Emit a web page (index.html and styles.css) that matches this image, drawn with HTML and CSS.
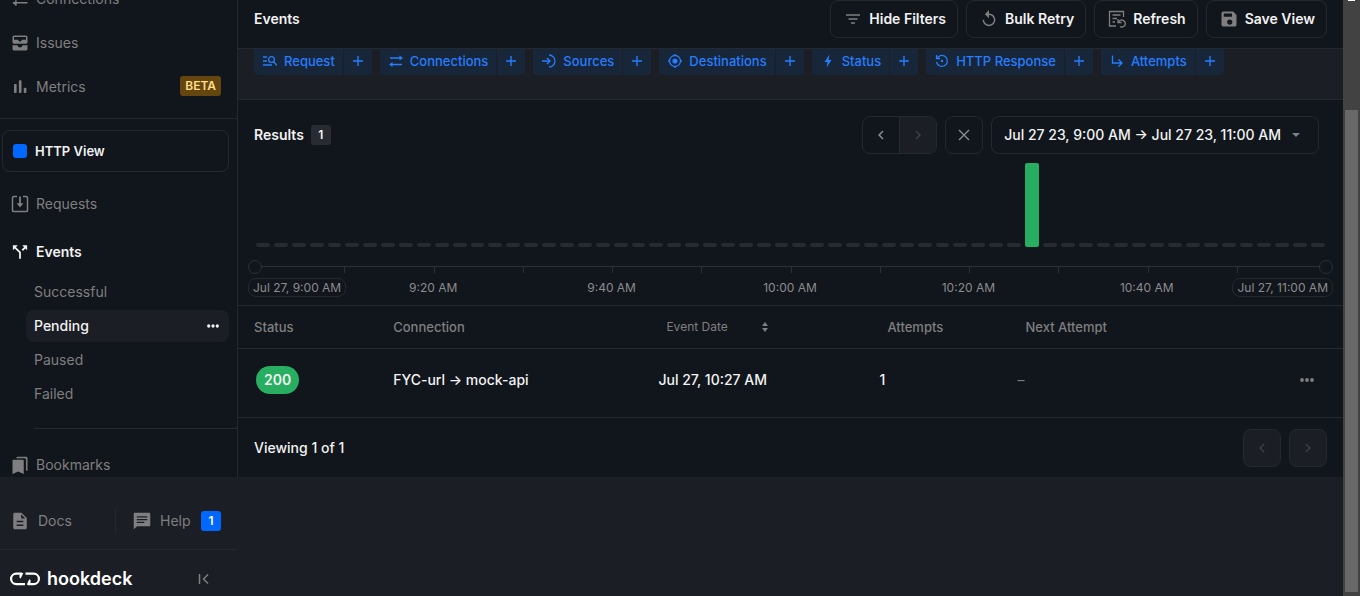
FILE: index.html
```html
<!DOCTYPE html>
<html lang="en">
<head>
<meta charset="utf-8">
<title>Events</title>
<link rel="stylesheet" href="styles.css">
</head>
<body>
<svg class="defs" aria-hidden="true">
  <symbol id="i-swap" viewBox="0 0 24 24"><path d="M2 7h19M17.500 3.500V10.500M22 17H3M6.500 13.500V20.500" fill="none" stroke="currentColor" stroke-width="2"/><path d="M17 3l5.500 4-5.500 1zM7 21l-5.500-4 5.500-1z" fill="currentColor"/></symbol>
  <symbol id="i-left" viewBox="0 0 24 24"><path fill="currentColor" d="M15.410 7.410L14 6l-6 6 6 6 1.410-1.410L10.830 12z"/></symbol>
  <symbol id="i-right" viewBox="0 0 24 24"><path fill="currentColor" d="M10 6L8.590 7.410 13.170 12l-4.580 4.590L10 18l6-6z"/></symbol>
  <symbol id="i-plus" viewBox="0 0 10 10"><path d="M5 0v10M0 5h10" stroke="currentColor" stroke-width="1.400"/></symbol>
  <symbol id="i-dots" viewBox="0 0 14 4"><g fill="currentColor"><circle cx="2" cy="2" r="1.900"/><circle cx="7" cy="2" r="1.900"/><circle cx="12" cy="2" r="1.900"/></g></symbol>
</svg>
<div class="app">
  <aside class="sidebar">
    <nav class="nav" aria-label="Main">
      <a class="nav-item" href="#"><svg class="icon"><use href="#i-swap"/></svg>Connections</a>
      <a class="nav-item" href="#"><svg class="icon" viewBox="0 0 24 24"><path fill="currentColor" fill-rule="evenodd" d="M19.500 2h-15C3 2 2 3 2 4.500v6C2 12 3 13 4.500 13h15c1.500 0 2.500-1 2.500-2.500v-6C22 3 21 2 19.500 2zM20 7.500h-5.500c-.500 1.500-1 2.500-2.500 2.500s-2-1-2.500-2.500H4V4h16zM2 15h6.500c.500 1.500 1.500 3 3.500 3s3-1.500 3.500-3H22v4.500c0 1.500-1 2.500-2.500 2.500h-15C3 22 2 21 2 19.500z"/></svg>Issues</a>
      <a class="nav-item" href="#"><svg class="icon" viewBox="0 0 24 24"><g fill="currentColor"><rect x="4" y="8" width="3.500" height="12" rx="1"/><rect x="10.500" y="3" width="3.500" height="17" rx="1"/><rect x="17" y="13" width="3.500" height="7" rx="1"/></g></svg>Metrics<span class="beta">BETA</span></a>
      <hr class="rule">
      <button class="source" type="button"><span class="swatch"></span>HTTP View</button>
      <a class="nav-item tall" href="#"><svg class="icon" viewBox="0 0 24 24"><path d="M8 2H3.500Q2 2 2 3.500v17Q2 22 3.500 22h17q1.500 0 1.500-1.500v-17Q22 2 20.500 2H16" fill="none" stroke="currentColor" stroke-width="2"/><path d="M12 2v10" stroke="currentColor" stroke-width="2.400"/><path d="M7.500 11h9L12 16.500z" fill="currentColor"/></svg>Requests</a>
      <a class="nav-item tall current" href="#"><svg class="icon" viewBox="0 0 24 24"><path fill="currentColor" d="M15 3l2.500 2.500-3.300 3.300 1.700 1.700 3.300-3.300L21.500 9.500V3zM9 3H2.500v6.500L4.900 7.200l5.900 5.900V21h2.400v-8.900L6.600 5.500z"/></svg>Events</a>
      <ul class="subnav">
        <li><a href="#">Successful</a></li>
        <li><a class="selected" href="#">Pending<svg class="more"><use href="#i-dots"/></svg></a></li>
        <li><a href="#">Paused</a></li>
        <li><a href="#">Failed</a></li>
      </ul>
      <hr class="rule inset">
      <a class="nav-item" href="#"><svg class="icon" viewBox="0 0 24 24"><path fill="currentColor" d="M20 19l2 1V3c0-1.100-.900-2-2-2H9C7.900 1 7 1.900 7 3h11c1.100 0 2 .900 2 2zM15.500 5h-12C2.700 5 2 5.700 2 6.500V24l7.500-3.200L17 24V6.500c0-.800-.700-1.500-1.500-1.500z"/></svg>Bookmarks</a>
    </nav>
    <footer class="side-foot">
      <div class="links">
        <a class="docs" href="#"><svg class="icon" viewBox="0 0 24 24"><path fill="currentColor" d="M14 1H5c-1.100 0-2 .900-2 2v18c0 1.100.900 2 2 2h14c1.100 0 2-.900 2-2V8zm2.500 17.500h-9v-2h9zm0-5h-9v-2h9zM13.500 8.500V3l5.500 5.500z"/></svg>Docs</a>
        <a class="help" href="#"><svg class="icon" viewBox="0 0 24 24"><path fill="currentColor" d="M21.500 1h-19C1.500 1 1 1.500 1 2.500V23l4.500-4h16c1 0 1.500-.500 1.500-1.500v-15C23 1.500 22.500 1 21.500 1zM5 5.500h14v1.800H5zm0 3.700h14V11H5zm10 5.500H5v-1.800h10z"/></svg>Help<span class="count">1</span></a>
      </div>
      <div class="brand">
        <a class="logo" href="#"><svg class="mark" viewBox="0 0 30 14" aria-hidden="true"><g fill="none" stroke="currentColor" stroke-width="2.200"><path d="M12 1.700H6.300a5.200 5.200 0 0 0 0 10.400H15"/><path d="M18 12.100h5.700a5.200 5.200 0 0 0 0-10.400H15.500"/></g><path fill="currentColor" d="M9.500 1H13.300l-2.600 5.500-1.200-.700zM20.500 12.800H16.700l2.600-5.500 1.200.700z"/></svg>hookdeck</a>
        <button class="collapse" type="button" aria-label="Collapse sidebar"><svg viewBox="0 0 12 12"><path d="M1.500 1v10M10 1.500L5.500 6l4.500 4.500" fill="none" stroke="currentColor" stroke-width="1.500"/></svg></button>
      </div>
    </footer>
  </aside>

  <main class="main">
    <header class="topbar">
      <h1>Events</h1>
      <div class="actions">
        <button class="btn" type="button"><svg class="icon" viewBox="0 0 18 18"><path d="M2 5h14M4.500 9h9M7 13h4" stroke="currentColor" stroke-width="1.500"/></svg>Hide Filters</button>
        <button class="btn" type="button"><svg class="icon" viewBox="0 0 24 24"><path fill="currentColor" d="M12 4.500V0L6.500 5.500 12 11V6.500c3.600 0 6.500 2.900 6.500 6.500s-2.900 6.500-6.500 6.500S5.500 16.600 5.500 13h-2c0 4.700 3.800 8.500 8.500 8.500s8.500-3.800 8.500-8.500-3.800-8.500-8.500-8.500z"/></svg>Bulk Retry</button>
        <button class="btn" type="button"><svg class="icon" viewBox="0 0 18 18"><g fill="none" stroke="currentColor" stroke-width="1.300"><path d="M8 16H1.500V1.500h14V7M4.500 5h8M4.500 8.500H9M4.500 12H7"/><path d="M10 9v3.500h3.500M10.500 12.300A3.500 3.500 0 1 1 12 16.500"/></g></svg>Refresh</button>
        <button class="btn" type="button"><svg class="icon" viewBox="0 0 24 24"><path fill="currentColor" d="M17.500 2H4.500C3 2 2 3 2 4.500v15C2 21 3 22 4.500 22h15c1.500 0 2.500-1 2.500-2.500v-13zM13 19.500c-2 0-3.500-1.500-3.500-3.500s1.500-3.500 3.500-3.500 3.500 1.500 3.500 3.500-1.500 3.500-3.500 3.500zM16 9H5V4.500h11z"/></svg>Save View</button>
      </div>
    </header>

    <div class="filters">
      <div class="chip"><button type="button"><svg class="ficon" viewBox="0 0 14 14"><g fill="none" stroke="currentColor" stroke-width="1.300"><path d="M0 3h4M0 7h4M0 11h9"/><circle cx="8.500" cy="5.500" r="2.900"/><path d="M10.500 7.500l3.500 4"/></g></svg>Request</button><button class="add" type="button" aria-label="Add Request filter"><svg><use href="#i-plus"/></svg></button></div>
      <div class="chip"><button type="button"><svg class="ficon" viewBox="0 0 14 14"><path d="M1 4h11M13 10.500H2" fill="none" stroke="currentColor" stroke-width="1.300"/><path d="M10.500 1.500L14 4l-3.500 2.500zM3.500 8L0 10.500 3.500 13z" fill="currentColor"/></svg>Connections</button><button class="add" type="button" aria-label="Add Connections filter"><svg><use href="#i-plus"/></svg></button></div>
      <div class="chip"><button type="button"><svg class="ficon" viewBox="0 0 14 14"><g fill="none" stroke="currentColor" stroke-width="1.300"><path d="M0 7h8M5 4l3 3-3 3M7 1a6 6 0 0 1 0 12"/></g></svg>Sources</button><button class="add" type="button" aria-label="Add Sources filter"><svg><use href="#i-plus"/></svg></button></div>
      <div class="chip"><button type="button"><svg class="ficon" viewBox="0 0 14 14"><g fill="none" stroke="currentColor" stroke-width="1.300"><circle cx="7" cy="7" r="5.500"/><path d="M7 0v2M7 12v2M0 7h2M12 7h2"/></g><circle cx="7" cy="7" r="2.600" fill="currentColor"/></svg>Destinations</button><button class="add" type="button" aria-label="Add Destinations filter"><svg><use href="#i-plus"/></svg></button></div>
      <div class="chip"><button type="button"><svg class="ficon" viewBox="0 0 14 14"><path fill="currentColor" d="M8.500 0.500L3.500 8H6.500L5.500 13.500 10.500 6H7.500z"/></svg>Status</button><button class="add" type="button" aria-label="Add Status filter"><svg><use href="#i-plus"/></svg></button></div>
      <div class="chip"><button type="button"><svg class="ficon" viewBox="0 0 14 14"><g fill="none" stroke="currentColor" stroke-width="1.300"><path d="M2.500 3.500A5.500 5.500 0 1 1 1.500 8M1.500 1v3.500H5"/></g><circle cx="7" cy="7" r="1.200" fill="currentColor"/></svg>HTTP Response</button><button class="add" type="button" aria-label="Add HTTP Response filter"><svg><use href="#i-plus"/></svg></button></div>
      <div class="chip"><button type="button"><svg class="ficon" viewBox="0 0 14 14"><path d="M2.500 1.500V9h9M8.500 5.500L12 9l-3.500 3.500" fill="none" stroke="currentColor" stroke-width="1.300"/></svg>Attempts</button><button class="add" type="button" aria-label="Add Attempts filter"><svg><use href="#i-plus"/></svg></button></div>
    </div>

    <section class="results">
      <div class="results-head">
        <h2>Results</h2><span class="total">1</span>
        <div class="range">
          <div class="pair">
            <button type="button" aria-label="Earlier"><svg><use href="#i-left"/></svg></button>
            <button type="button" aria-label="Later" disabled><svg><use href="#i-right"/></svg></button>
          </div>
          <button class="clear" type="button" aria-label="Clear range"><svg viewBox="0 0 12 12"><path d="M1 1l10 10M11 1L1 11" stroke="currentColor" stroke-width="1.400"/></svg></button>
          <button class="period" type="button">Jul 27 23, 9:00 AM → Jul 27 23, 11:00 AM<svg viewBox="0 0 8 4"><path d="M0 0h8L4 4z" fill="currentColor"/></svg></button>
        </div>
      </div>
      <div class="bars" id="bars"></div>
      <div class="axis">
        <div class="rail"><i></i><i></i><i></i><i></i><i></i><i></i><i></i><i></i><i></i><i></i><i></i><i></i></div>
        <input type="range" min="0" max="120" value="0" aria-label="Range start">
        <input type="range" min="0" max="120" value="120" aria-label="Range end">
      </div>
      <div class="times">
        <span class="end">Jul 27, 9:00 AM</span><span>9:20 AM</span><span>9:40 AM</span><span>10:00 AM</span><span>10:20 AM</span><span>10:40 AM</span><span class="end last">Jul 27, 11:00 AM</span>
      </div>
    </section>

    <table class="events">
      <colgroup><col class="c1"><col class="c2"><col class="c3"><col class="c4"><col class="c5"><col class="c6"></colgroup>
      <thead>
        <tr><th>Status</th><th>Connection</th><th class="in"><button class="sort" type="button">Event Date<svg viewBox="0 0 6 10"><path d="M0 4h6L3 0zM0 6h6L3 10z" fill="currentColor"/></svg></button></th><th class="in">Attempts</th><th class="in">Next Attempt</th><th></th></tr>
      </thead>
      <tbody>
        <tr><td><span class="pill">200</span></td><td>FYC-url → mock-api</td><td>Jul 27, 10:27 AM</td><td>1</td><td class="dim">–</td><td class="menu"><button type="button" aria-label="Event actions"><svg><use href="#i-dots"/></svg></button></td></tr>
      </tbody>
    </table>
    <div class="pager">
      <span>Viewing 1 of 1</span>
      <div class="pages">
        <button type="button" aria-label="Previous page" disabled><svg><use href="#i-left"/></svg></button>
        <button type="button" aria-label="Next page" disabled><svg><use href="#i-right"/></svg></button>
      </div>
    </div>
  </main>
  <div class="scrollbar" aria-hidden="true"><span class="up"></span><div class="thumb"></div></div>
</div>
<script src="chart.js"></script>
</body>
</html>
```
FILE: chart.js
```js
const bars = document.getElementById('bars');
for (let i = 0; i < 60; i++) {
  const bar = document.createElement('span');
  if (i === 43) bar.className = 'hit';
  bars.appendChild(bar);
}
```
FILE: styles.css
```css
:root {
  --bg: #11151c;
  --panel: #1b1e25;
  --line: #24282f;
  --grey: #7f7f7f;
  --text: #f2f2f2;
  --blue: #0068ff;
}
* { box-sizing: border-box; }
body {
  margin: 0;
  background: var(--panel);
  color: var(--text);
  font: 500 14px/20px Inter, "Liberation Sans", sans-serif;
}
button { font: inherit; color: inherit; background: none; border: 0; padding: 0; margin: 0; }
a { color: inherit; text-decoration: none; }
svg { display: block; flex: none; }
h1, h2 { font-size: 14px; line-height: 20px; font-weight: 600; margin: 0; }
.defs { position: absolute; width: 0; height: 0; }
.icon { width: 18px; height: 18px; }
.app { display: flex; height: 100vh; overflow: hidden; }

.sidebar { width: 238px; flex: none; display: flex; flex-direction: column; }
.nav { flex: 1; min-height: 0; overflow: hidden; background: var(--bg); border-right: 1px solid var(--line); color: var(--grey); font-weight: 400; }
.nav-item { display: flex; align-items: center; gap: 7px; height: 44px; padding: 0 16px 0 11px; }
.nav-item:first-child { margin-top: -23px; }
.nav-item.tall { height: 48px; }
.current { color: var(--text); font-weight: 600; }
.beta { margin: 0 0 2px auto; padding: 0 5px; border-radius: 3px; background: #66460f; color: #ffdd8a; font-size: 12px; font-weight: 600; }
.rule { border: 0; border-top: 1px solid var(--line); margin: 9px 0 11px; }
.rule.inset { margin: 18px 0 14px 34px; }
.source { display: flex; align-items: center; gap: 8px; width: 227px; height: 42px; margin: 0 0 8px 2px; padding: 0 10px; border: 1px solid var(--line); border-radius: 8px; color: var(--text); font-size: 13px; font-weight: 600; }
.swatch { width: 14px; height: 14px; border-radius: 3px; background: var(--blue); }
.subnav { list-style: none; margin: 0; padding: 0 8px 0 26px; display: grid; gap: 2px; }
.subnav a { display: flex; align-items: center; justify-content: space-between; height: 32px; padding: 0 10px 0 8px; border-radius: 8px; }
.subnav .selected { background: var(--panel); color: var(--text); font-weight: 500; }
.more { width: 12px; height: 4px; }
.side-foot { color: var(--grey); padding-top: 16px; border-right: 1px solid var(--panel); font-weight: 400; }
.links { display: flex; align-items: center; padding: 16px 16px 16px 11px; border-bottom: 1px solid var(--line); }
.links a { display: flex; align-items: center; height: 24px; gap: 9px; }
.docs { width: 105px; border-right: 1px solid var(--line); }
.help { flex: 1; padding-left: 17px; }
.count { margin-left: auto; width: 20px; height: 20px; border-radius: 3px; background: var(--blue); color: #fff; font-size: 12px; font-weight: 600; text-align: center; }
.brand { display: flex; align-items: center; justify-content: space-between; height: 46px; padding: 12px 27px 0 10px; }
.logo { display: flex; align-items: center; gap: 7px; color: #fff; font-size: 18px; font-weight: 600; }
.mark { width: 30px; height: 14px; }
.collapse svg { width: 12px; height: 12px; }

.main { flex: 1; min-width: 0; }
.topbar { display: flex; align-items: flex-start; justify-content: space-between; padding: 0 16px 10px; background: var(--bg); border-bottom: 1px solid var(--line); }
.topbar h1 { padding-top: 9px; }
.actions { display: flex; gap: 8px; }
.btn { display: flex; align-items: center; gap: 7px; height: 38px; padding: 0 11px 0 13px; border: 1px solid var(--line); border-radius: 8px; font-weight: 600; }
.btn .icon { color: var(--grey); }
.filters { display: flex; gap: 8px; height: 51px; padding: 0 16px; border-bottom: 1px solid var(--line); color: #267dff; font-size: 13px; }
.chip { display: flex; gap: 1px; height: 26px; }
.chip button { display: flex; align-items: center; gap: 7px; padding: 0 8px 2px 9px; background: #172638; border-radius: 0 0 0 4px; }
.chip .add { padding: 0 9px 2px; border-radius: 0 0 4px 0; }
.ficon { width: 14px; height: 14px; }
.add svg { width: 10px; height: 10px; }

.results { background: var(--bg); padding: 16px 10px 8px; border-bottom: 1px solid var(--line); }
.results-head { display: flex; align-items: center; padding: 0 14px 0 6px; }
.total { width: 20px; height: 20px; margin-left: 7px; border-radius: 3px; background: #282b32; font-size: 12px; font-weight: 600; text-align: center; }
.range { display: flex; gap: 8px; margin-left: auto; color: #8c8c8c; }
.pair { display: flex; border: 1px solid var(--line); border-radius: 8px; overflow: hidden; }
.pair button { width: 36px; height: 36px; display: grid; place-items: center; }
.pair button + button { width: 37px; border-left: 1px solid var(--line); }
.pair svg, .pages svg { width: 18px; height: 18px; }
.pair button:disabled, .pages button:disabled { background: var(--panel); color: #3a3e45; }
.clear { width: 38px; height: 38px; display: grid; place-items: center; border: 1px solid var(--line); border-radius: 8px; }
.clear svg { width: 12px; height: 12px; }
.period { display: flex; align-items: center; gap: 11px; height: 38px; padding: 0 18px 0 12px; border: 1px solid var(--line); border-radius: 8px; color: var(--text); font-weight: 500; }
.period svg { width: 8px; height: 4px; color: var(--grey); }
.bars { display: grid; grid-template-columns: repeat(60, 1fr); column-gap: 4px; align-items: end; height: 84px; margin: 9px 8px 0; }
.bars span { height: 4px; border-radius: 2px; background: #262a32; }
.bars .hit { height: 84px; background: #27ae60; }
.axis { position: relative; height: 14px; margin-top: 13px; padding: 6px 7px 0; }
.rail { display: grid; grid-template-columns: repeat(12, 1fr); border-top: 1px solid #2c3037; }
.rail i { height: 6px; border-left: 1px solid #2c3037; }
.rail i:first-child { border-left: 0; }
.axis input { position: absolute; inset: 0; width: 100%; height: 14px; margin: 0; appearance: none; background: none; pointer-events: none; }
.axis input::-webkit-slider-thumb { appearance: none; width: 14px; height: 14px; border: 1px solid #2c3037; border-radius: 50%; background: var(--bg); pointer-events: auto; }
.times { display: grid; grid-template-columns: 96px repeat(5, 1fr) 97px; margin-top: 4px; color: #8c8c8c; font-size: 12px; font-weight: 400; line-height: 17px; text-align: center; white-space: nowrap; }
.times span { padding: 1px 0; }
.times .end { justify-self: start; padding: 0 4px; border: 1px solid var(--line); border-radius: 8px; }
.times .last { justify-self: end; }

.events { width: 100%; border-collapse: separate; border-spacing: 0; table-layout: fixed; background: var(--bg); }
.c1 { width: 12.6%; }
.c2 { width: 24%; }
.c3 { width: 20%; }
.c4 { width: 12.5%; }
.c6 { width: 70px; }
.events th, .events td { text-align: left; padding: 0 16px; border-bottom: 1px solid var(--line); }
.events th { height: 43px; color: var(--grey); font-size: 13px; font-weight: 500; }
.events th.in { padding-left: 24px; padding-right: 0; }
.sort { display: flex; align-items: center; gap: 34px; font-size: 12px; font-weight: 400; }
.sort svg { width: 6px; height: 10px; }
.events td { height: 69px; padding-bottom: 6px; }
.events .dim { color: var(--grey); font-weight: 400; }
.pill { display: inline-block; height: 28px; margin-left: 2px; padding: 0 8px; border-radius: 14px; background: #27ae60; line-height: 28px; font-weight: 600; }
.events .menu { color: var(--grey); }
.menu button { display: block; margin-left: 11px; }
.menu svg { width: 14px; height: 4px; }
.pager { display: flex; align-items: center; justify-content: space-between; padding: 11px 16px 10px; background: var(--bg); }
.pages { display: flex; gap: 8px; }
.pages button { width: 38px; height: 38px; display: grid; place-items: center; border: 1px solid var(--line); border-radius: 8px; }

.scrollbar { width: 17px; flex: none; display: flex; flex-direction: column; align-items: center; background: #424242; padding-bottom: 4px; }
.up { width: 7px; height: 1px; background: #fff; }
.thumb { width: 13px; flex: 1; margin-top: 109px; background: #686868; }
```
